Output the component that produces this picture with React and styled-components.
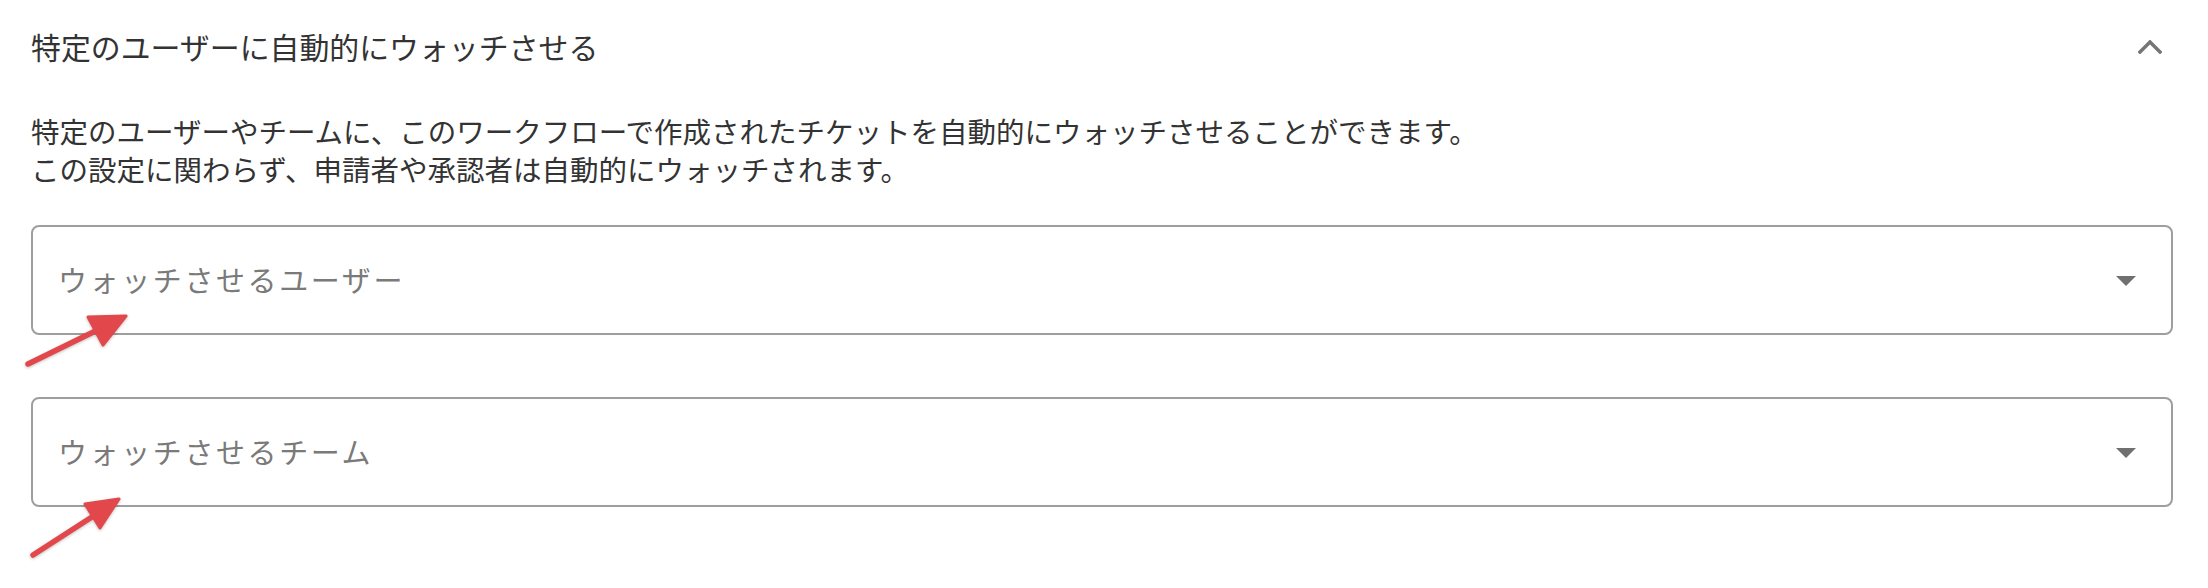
import React from 'react';
import styled, { createGlobalStyle } from 'styled-components';

const GlobalStyle = createGlobalStyle`
  html, body {
    margin: 0;
    padding: 0;
    background: #ffffff;
  }
  body {
    font-family: "Noto Sans CJK JP", "Noto Sans", sans-serif;
    color: #333333;
  }
`

const Panel = styled.section`
  width: 2208px;
  height: 588px;
  box-sizing: border-box;
  padding: 0 35px 0 31px;
  display: flex;
  flex-direction: column;
`

const Header = styled.div`
  height: 94px;
  display: flex;
  flex-direction: row;
  align-items: center;
  justify-content: space-between;
`

const Title = styled.h2`
  margin: 0;
  font-size: 29.9px;
  font-weight: 400;
  color: #333333;
  line-height: 1;
`

const Chevron = styled.svg`
  width: 24px;
  height: 14px;
  margin-right: 11px;
  margin-top: -1px;
`

const Description = styled.p`
  margin: 18px 0 0 0;
  font-size: 28.5px;
  line-height: 38px;
  color: #333333;
`

const Fields = styled.div`
  display: flex;
  flex-direction: column;
  gap: 62px;
  margin-top: 37px;
`

const FieldWrap = styled.div`
  position: relative;
`

const Select = styled.div`
  height: 110px;
  box-sizing: border-box;
  border: 2px solid #9e9e9e;
  border-radius: 8px;
  display: flex;
  flex-direction: row;
  align-items: center;
  justify-content: space-between;
  padding: 0 35px 0 25px;
  cursor: pointer;
`

const Placeholder = styled.span`
  font-size: 29px;
  letter-spacing: 2.6px;
  color: #7a7a7a;
  margin-top: -2px;
`

const Caret = styled.svg`
  width: 20px;
  height: 10px;
  margin-top: 2px;
`

const Arrow = styled.svg`
  position: absolute;
  left: -10px;
  top: 80px;
  width: 120px;
  height: 90px;
  overflow: visible;
  pointer-events: none;
  filter: drop-shadow(0 1px 1.5px rgba(0, 0, 0, 0.25));
`

function RedArrow({ tail, tip, wings }) {
  const [ax, ay] = tail;
  const [tx, ty] = tip;
  // shaft ends at the middle of the wing base
  const bx = (wings[0][0] + wings[1][0]) / 2 + 4;
  const by = (wings[0][1] + wings[1][1]) / 2 - 2;
  return (
    <Arrow viewBox="0 0 120 90">
      <line x1={ax} y1={ay} x2={bx} y2={by} stroke="#e2484b" strokeWidth={5.5} strokeLinecap="round" />
      <polygon
        points={`${tx},${ty} ${wings[0][0]},${wings[0][1]} ${wings[1][0]},${wings[1][1]}`}
        fill="#e2484b"
        stroke="#e2484b"
        strokeWidth={3}
        strokeLinejoin="round"
      />
    </Arrow>
  );
}

function SelectField({ placeholder, arrow }) {
  return (
    <FieldWrap>
      <Select>
        <Placeholder>{placeholder}</Placeholder>
        <Caret viewBox="0 0 20 10">
          <path d="M0 0H20L10 10Z" fill="#707070" />
        </Caret>
      </Select>
      <RedArrow {...arrow} />
    </FieldWrap>
  );
}

export default function App() {
  return (
    <>
      <GlobalStyle />
      <Panel>
        <Header>
          <Title>特定のユーザーに自動的にウォッチさせる</Title>
          <Chevron viewBox="0 0 24 14" fill="none">
            <path d="M2 12L12 2L22 12" stroke="#757575" strokeWidth={3.5} strokeLinecap="square" />
          </Chevron>
        </Header>
        <Description>
          特定のユーザーやチームに、このワークフローで作成されたチケットを自動的にウォッチさせることができます。
          <br />
          この設定に関わらず、申請者や承認者は自動的にウォッチされます。
        </Description>
        <Fields>
          <SelectField
            placeholder="ウォッチさせるユーザー"
            arrow={{ tail: [7, 59], tip: [105, 11], wings: [[67, 12], [82, 40]] }}
          />
          <SelectField
            placeholder="ウォッチさせるチーム"
            arrow={{ tail: [12, 78], tip: [98, 22], wings: [[64, 27], [79, 51]] }}
          />
        </Fields>
      </Panel>
    </>
  );
}
